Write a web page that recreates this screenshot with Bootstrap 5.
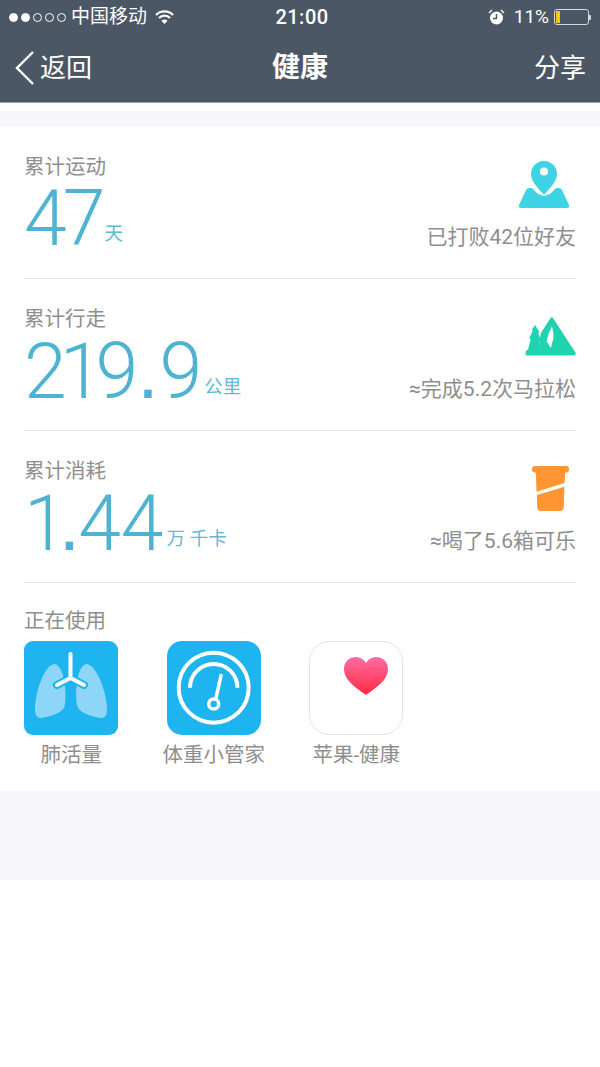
<!DOCTYPE html>
<html lang="zh-CN">
<head>
  <meta charset="UTF-8">
  <meta name="viewport" content="width=device-width, initial-scale=1.0">
  <link href="https://cdn.jsdelivr.net/npm/bootstrap@5.3.0/dist/css/bootstrap.min.css" rel="stylesheet">
  <style>
    body {
      background-color: #fff;
      font-family: Roboto, "Noto Sans CJK SC", sans-serif;
      color: #8e8e8e;
    }
    .top-head {
      height: 103px;
      background-color: #4c5766;
      color: #fff;
      border-bottom: 1px solid #9aa0a8;
    }
    .status-line {
      height: 34px;
      padding: 0 9px;
      font-size: 19px;
      line-height: 34px;
    }
    .side-slot { flex: 1 1 0; }
    .sig-dot {
      width: 9px;
      height: 9px;
      border-radius: 50%;
      border: 1px solid #fff;
      margin-right: 3px;
    }
    .sig-dot.on { background-color: #fff; }
    .carrier-name { margin-left: 2px; }
    .clock-text {
      font-size: 20px;
      font-weight: 500;
      letter-spacing: 0.5px;
      margin-left: 4px;
    }
    .battery-pct { margin-left: 9px; }
    .battery-box {
      width: 35px;
      height: 16px;
      margin-left: 5px;
      border: 1px solid #d5d8dc;
      border-radius: 3px;
      padding: 1px;
    }
    .battery-fill {
      width: 4px;
      height: 100%;
      background-color: #f7c815;
    }
    .battery-nub {
      width: 2px;
      height: 5px;
      background-color: #d5d8dc;
      border-radius: 0 1px 1px 0;
    }
    .nav-line {
      height: 68px;
      padding: 0 14px;
      font-size: 26px;
    }
    .nav-title {
      font-size: 28px;
      font-weight: 700;
    }
    .pale-band { background-color: #f6f6fb; }
    .band-top { height: 16px; margin-top: 8px; }
    .band-bottom { height: 89px; }
    .stat-row {
      height: 152px;
      margin: 0 24px;
      padding-top: 26px;
      border-bottom: 1px solid #e3e3e3;
    }
    .stat-label {
      font-size: 20.5px;
      line-height: 28px;
    }
    .num-line { margin-top: 6px; }
    .stat-num {
      font-size: 77px;
      font-weight: 300;
      line-height: 64px;
      color: #4db3d1;
    }
    .num-days { letter-spacing: -4px; }
    .num-walk { letter-spacing: -7px; }
    .num-one { letter-spacing: -10px; }
    .num-dot {
      font-family: "Liberation Sans", sans-serif;
      font-weight: 400;
      margin-left: 2px;
      letter-spacing: -2px;
    }
    .num-walk .num-dot {
      margin-left: 6px;
      letter-spacing: 1px;
    }
    .stat-unit {
      font-size: 18.5px;
      line-height: 22px;
      color: #5db9d4;
      margin-bottom: 6px;
    }
    .unit-days { margin-left: 3px; }
    .unit-walk { margin-left: 9px; }
    .unit-cal { margin-left: 3px; }
    .stat-side {
      font-size: 21px;
      line-height: 28px;
      text-align: right;
    }
    .icon-pin { margin: 8px 6px 14px 0; }
    .icon-hill { margin: 12px 0 19px 0; }
    .icon-cup { margin: 9px 7px 16px 0; }
    .used-box { padding-top: 24px; height: 208px; }
    .used-label {
      font-size: 20.5px;
      line-height: 28px;
      margin-left: 24px;
      margin-bottom: 6px;
    }
    .app-cell { width: 142.5px; }
    .app-tile {
      width: 94px;
      height: 94px;
      overflow: hidden;
    }
    .tile-lung { background-color: #1db4f0; border-radius: 9px; }
    .tile-scale { background-color: #1db4f0; border-radius: 15px; }
    .tile-heart { border: 1px solid #e2e2e2; border-radius: 20px; }
    .app-name {
      font-size: 20.5px;
      line-height: 28px;
      margin-top: 6px;
      white-space: nowrap;
    }
  </style>
</head>
<body>
  <div class="top-head">
    <div class="status-line d-flex align-items-center">
      <div class="side-slot d-flex align-items-center">
        <span class="sig-dot on"></span>
        <span class="sig-dot on"></span>
        <span class="sig-dot"></span>
        <span class="sig-dot"></span>
        <span class="sig-dot"></span>
        <span class="carrier-name">中国移动</span>
        <svg class="ms-2" width="19" height="15" viewBox="0 0 19 15"><path d="M1 5 A12 12 0 0 1 18 5 M4 8 A7.5 7.5 0 0 1 15 8" fill="none" stroke="#fff" stroke-width="2.2"/><path d="M6.5 10.8 A4 4 0 0 1 12.5 10.8 L9.5 14Z" fill="#fff"/></svg>
      </div>
      <span class="clock-text">21:00</span>
      <div class="side-slot d-flex align-items-center justify-content-end">
        <svg width="17" height="16" viewBox="0 0 17 16"><circle cx="8.5" cy="9" r="6.5" fill="#fff"/><path d="M8.5 5 V9.5 H5" fill="none" stroke="#4c5766" stroke-width="1.5"/><path d="M1 4 L4 1 M16 4 L13 1" stroke="#fff" stroke-width="1.4"/></svg>
        <span class="battery-pct">11%</span>
        <span class="battery-box"><span class="battery-fill d-block"></span></span>
        <span class="battery-nub"></span>
      </div>
    </div>
    <div class="nav-line d-flex align-items-center">
      <div class="side-slot d-flex align-items-center">
        <svg width="22" height="36" viewBox="0 0 22 36"><path d="M19 2 L3 18 L19 34" fill="none" stroke="#fff" stroke-width="2.4"/></svg>
        <span class="ms-1">返回</span>
      </div>
      <span class="nav-title">健康</span>
      <div class="side-slot text-end">分享</div>
    </div>
  </div>
  <div class="pale-band band-top"></div>

  <div class="stat-row d-flex justify-content-between">
    <div>
      <div class="stat-label">累计运动</div>
      <div class="num-line d-flex align-items-end">
        <span class="stat-num num-days">47</span>
        <span class="stat-unit unit-days">天</span>
      </div>
    </div>
    <div class="stat-side d-flex flex-column align-items-end">
      <svg class="icon-pin" width="52" height="48" viewBox="0 0 52 48">
        <path d="M14 27 L20 33 L26 35 L32 33 L38 27 L41 27 Q43 27 44 29 L51 44 Q52 47 49 47 H3 Q0 47 1 44 L8 29 Q9 27 11 27Z" fill="#3fd3e6"/>
        <path d="M26 0 A13 13 0 0 1 39 13 C39 21 31 28 26 34 C21 28 13 21 13 13 A13 13 0 0 1 26 0Z" fill="#3fd3e6"/>
        <circle cx="26" cy="10.5" r="4" fill="#fff"/>
      </svg>
      <div>已打败42位好友</div>
    </div>
  </div>

  <div class="stat-row d-flex justify-content-between">
    <div>
      <div class="stat-label">累计行走</div>
      <div class="num-line d-flex align-items-end">
        <span class="stat-num num-walk">219<span class="num-dot">.</span>9</span>
        <span class="stat-unit unit-walk">公里</span>
      </div>
    </div>
    <div class="stat-side d-flex flex-column align-items-end">
      <svg class="icon-hill" width="51" height="39" viewBox="0 0 51 39">
        <path d="M25.5 1 Q26.8 -0.5 28 1 L50.5 35.5 Q51.5 38.5 48.5 38.5 H2 Q0 38.5 0.6 36 L1.5 33 H14 L15.7 30 L14.5 25 L15.7 16.3Z" fill="#1fd3ae"/>
        <path d="M10 8 L6.7 13 L7.7 13.7 L4.3 21.3 L5.7 22.3 L3.3 31.3 V34 H16 V30 L14.3 24.7 L15.7 23 L13.3 16.3 L14.3 14.7Z" fill="#1fd3ae"/>
        <path d="M27 9.5 Q23 16 21.5 24.5 L26 31 L27 26 Q29 22 28.5 17Z" fill="#fff"/>
      </svg>
      <div>≈完成5.2次马拉松</div>
    </div>
  </div>

  <div class="stat-row d-flex justify-content-between">
    <div>
      <div class="stat-label">累计消耗</div>
      <div class="num-line d-flex align-items-end">
        <span class="stat-num"><span class="num-one">1</span><span class="num-dot">.</span>44</span>
        <span class="stat-unit unit-cal">万 千卡</span>
      </div>
    </div>
    <div class="stat-side d-flex flex-column align-items-end">
      <svg class="icon-cup" width="37" height="45" viewBox="0 0 37 45">
        <rect x="0" y="0" width="37" height="6.5" rx="3" fill="#ff9633"/>
        <path d="M3.7 5 H33.5 L32.6 17 L4.6 25.7Z" fill="#ff9633"/>
        <path d="M4.9 29 L32.4 20.7 L31.8 41 Q31.6 45 27.8 45 H9 Q5.4 45 5.2 41Z" fill="#ff9633"/>
      </svg>
      <div>≈喝了5.6箱可乐</div>
    </div>
  </div>

  <div class="used-box">
    <div class="used-label">正在使用</div>
    <div class="d-flex">
      <div class="app-cell d-flex flex-column align-items-center">
        <div class="app-tile tile-lung">
          <svg width="94" height="94" viewBox="0 0 94 94">
            <path d="M30 23 C35 23 38 30 40 38 C42 50 42 60 40 67 C36 73 24 76 17 77 C12 77.5 10.5 72 11 66 C12 50 20 25 30 23Z" fill="#8ed6f8"/>
            <path d="M63 23 C58 23 55 30 53.5 38 C51.5 50 51.5 60 54 67 C58 73 70 76 77 77 C82 77.5 83.5 72 83 66 C82 50 73 25 63 23Z" fill="#8ed6f8"/>
            <path d="M46.5 13 V37 M33 44 L46.5 37 L60 44" fill="none" stroke="#1db4f0" stroke-width="8" stroke-linecap="round" stroke-linejoin="round"/>
            <path d="M46.5 13 V37 M33 44 L46.5 37 L60 44" fill="none" stroke="#fff" stroke-width="4" stroke-linecap="round" stroke-linejoin="round"/>
          </svg>
        </div>
        <div class="app-name">肺活量</div>
      </div>
      <div class="app-cell d-flex flex-column align-items-center">
        <div class="app-tile tile-scale">
          <svg width="94" height="94" viewBox="0 0 94 94">
            <circle cx="46.7" cy="46.7" r="35" fill="none" stroke="#fff" stroke-width="4"/>
            <path d="M23 46.7 A23.7 23.7 0 0 1 70.4 46.7" fill="none" stroke="#fff" stroke-width="4"/>
            <path d="M54 34.5 L49 57" stroke="#fff" stroke-width="3.5" stroke-linecap="round"/>
            <circle cx="46.7" cy="63" r="5" fill="#1db4f0" stroke="#fff" stroke-width="3.5"/>
          </svg>
        </div>
        <div class="app-name">体重小管家</div>
      </div>
      <div class="app-cell d-flex flex-column align-items-center">
        <div class="app-tile tile-heart">
          <svg width="92" height="92" viewBox="0 0 92 92">
            <defs>
              <linearGradient id="heartFill" x1="0" y1="0" x2="0" y2="1">
                <stop offset="0" stop-color="#ff6da3"/>
                <stop offset="1" stop-color="#ff2a40"/>
              </linearGradient>
            </defs>
            <path transform="translate(34 15)" d="M22 38 C14 32 0 24 0 12 C0 5 5 0 11.5 0 C16 0 20 2.5 22 6 C24 2.5 28 0 32.5 0 C39 0 44 5 44 12 C44 24 30 32 22 38Z" fill="url(#heartFill)"/>
          </svg>
        </div>
        <div class="app-name">苹果-健康</div>
      </div>
    </div>
  </div>
  <div class="pale-band band-bottom"></div>
  <script src="https://cdn.jsdelivr.net/npm/bootstrap@5.3.0/dist/js/bootstrap.bundle.min.js"></script>
</body>
</html>
